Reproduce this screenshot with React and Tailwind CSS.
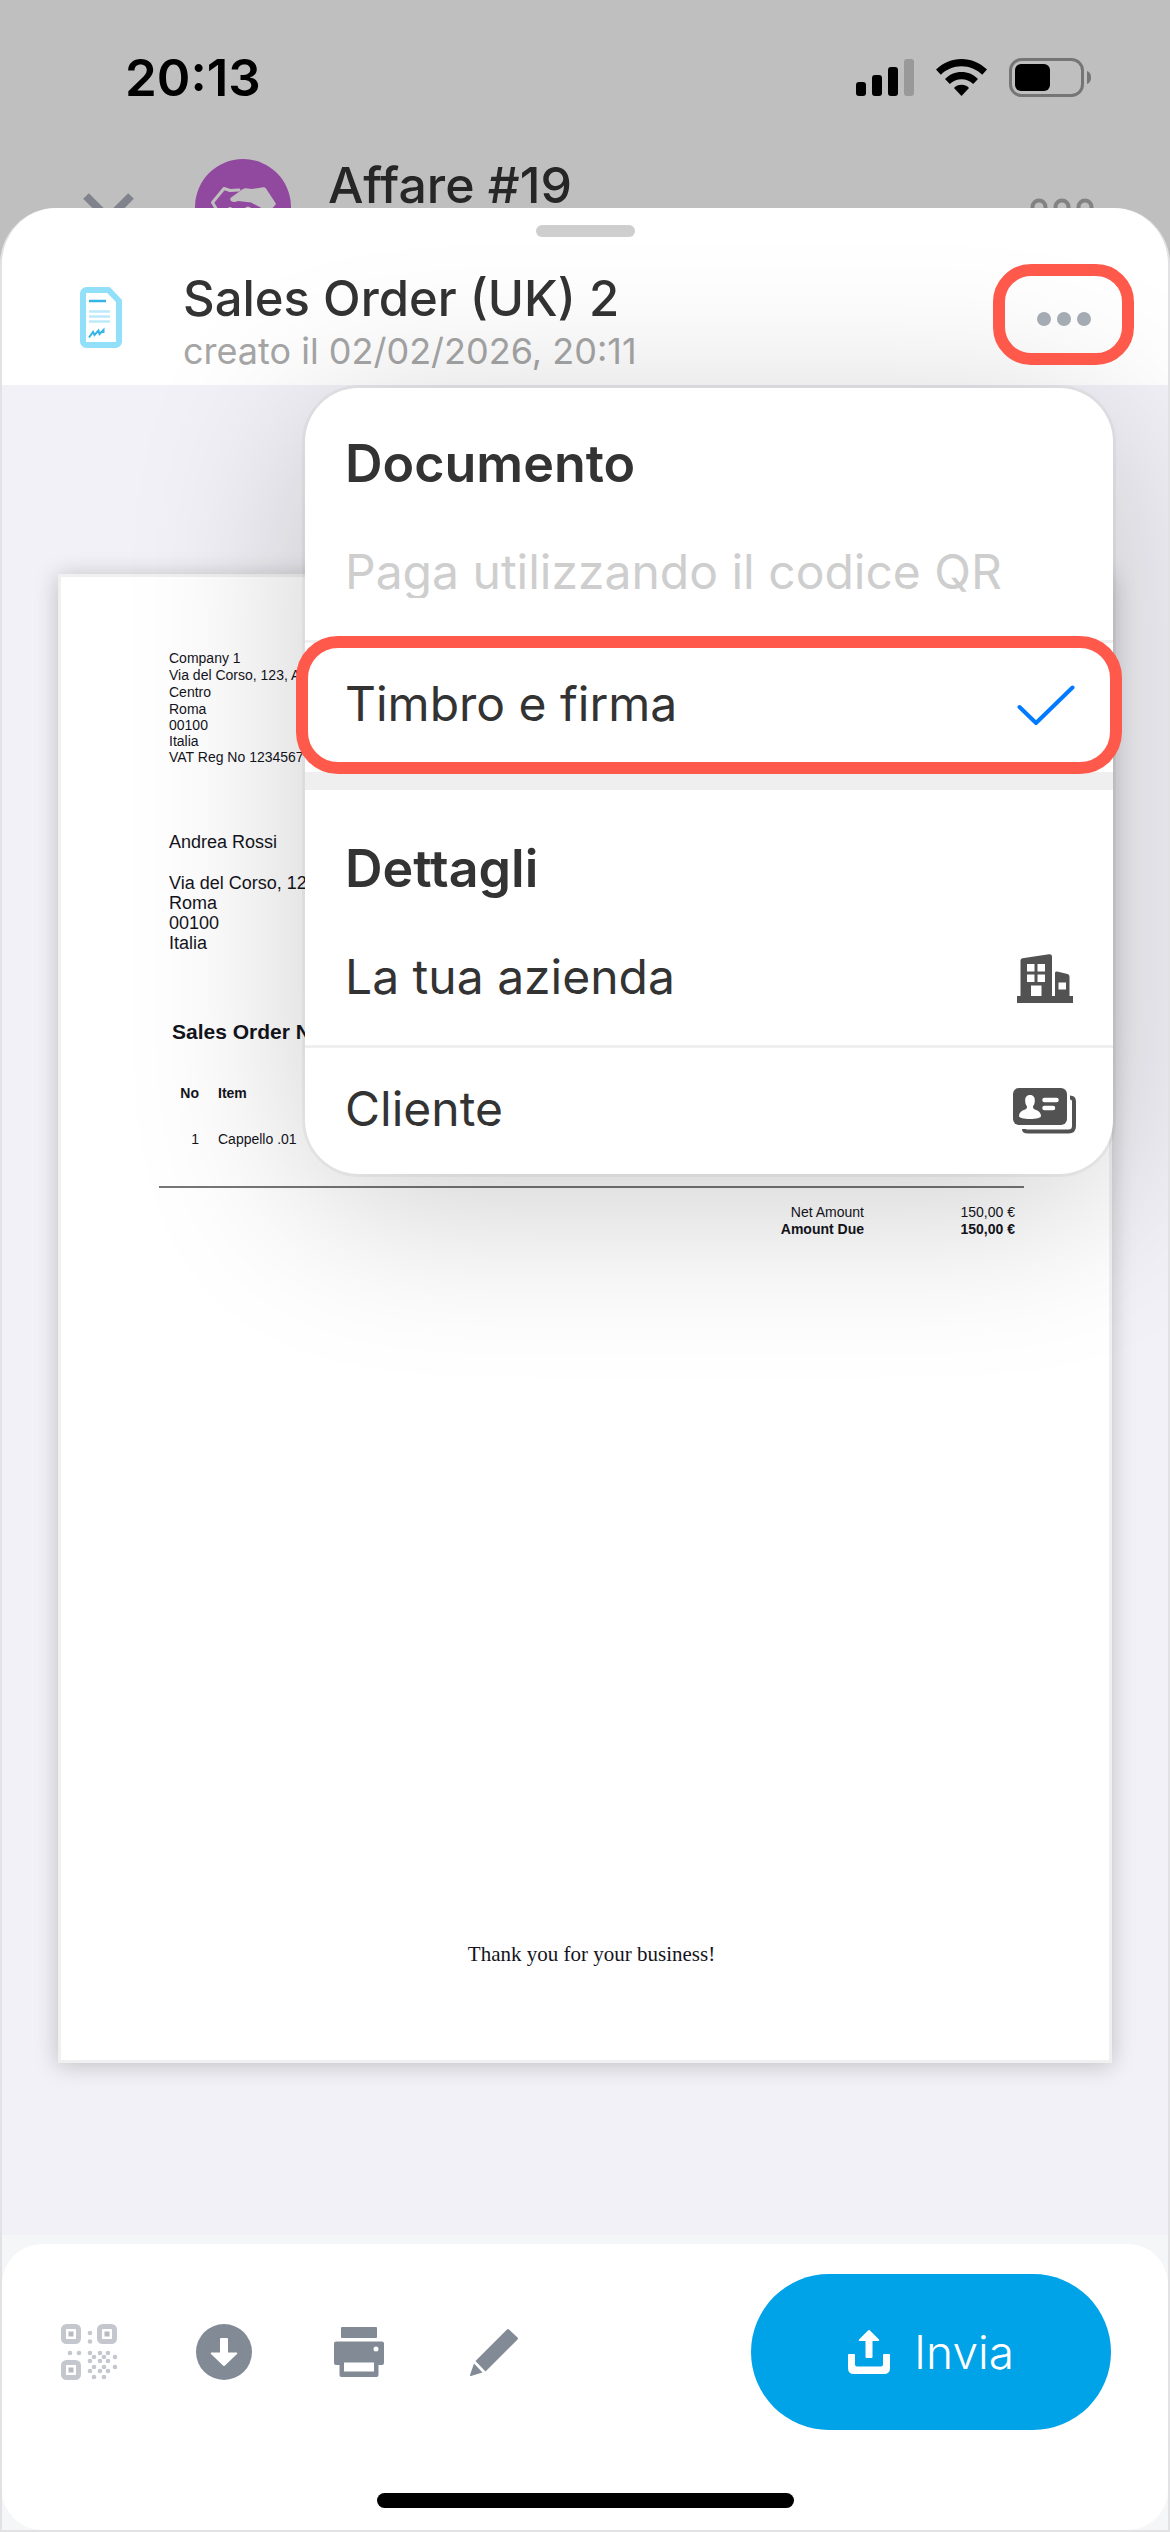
function SignalIcon() {
  return (
    <svg viewBox="0 0 58 37" className="h-[37px] w-[58px]" aria-hidden="true">
      <rect x="0" y="23" width="10" height="14" rx="3" />
      <rect x="16" y="16" width="10" height="21" rx="3" />
      <rect x="32" y="8" width="10" height="29" rx="3" />
      <rect x="48" y="0" width="10" height="37" rx="3" fill="#999" />
    </svg>
  );
}

function WifiIcon() {
  return (
    <svg viewBox="0 0 51 37" className="h-[37px] w-[51px]" aria-hidden="true">
      <path d="M0 10.6C7 3.700 16 0 25.500 0S44 3.700 51 10.600L46.200 15.800C40.500 10.300 33.500 7.300 25.500 7.300S10.500 10.300 4.800 15.800Z" />
      <path d="M9 20C13.500 15.500 19 13 25.500 13S37.500 15.500 42 20L37.200 25C34 21.800 30 20.200 25.500 20.200S17 21.800 13.800 25Z" />
      <path d="M18 29C20 27 22.500 25.800 25.500 25.800S31 27 33 29L25.500 37Z" />
    </svg>
  );
}

function BatteryIcon() {
  return (
    <svg viewBox="0 0 83 39" className="h-[39px] w-[83px]" aria-hidden="true">
      <rect x="1.5" y="1.500" width="72" height="36" rx="11" fill="none" stroke="#757575" strokeWidth="3" />
      <rect x="6" y="6" width="35" height="27" rx="6" />
      <path d="M78 13c3 1 4 3.500 4 6.500s-1 5.500-4 6.500z" fill="#757575" />
    </svg>
  );
}

function DocumentIcon() {
  return (
    <svg viewBox="0 0 42 61" className="h-[61px] w-[42px]" fill="none" aria-hidden="true">
      <path d="M6.500 3H28.500L39 14V54.500a3.500 3.500 0 0 1-3.500 3.500H6.500A3.500 3.500 0 0 1 3 54.500V6.500A3.500 3.500 0 0 1 6.500 3Z" stroke="#92dff9" strokeWidth="6" strokeLinejoin="round" />
      <path d="M9 14h17" stroke="#35b5e5" strokeWidth="2.500" />
      <path d="M9 24.500h21M9 29.500h21M9 34.500h21" stroke="#bde9fa" strokeWidth="2.500" />
      <path d="M9 50.500l4-5.500 1.500 3 4-4.500 1 3.500 4-4v3" stroke="#35b5e5" strokeWidth="2" />
    </svg>
  );
}

function HandshakeBadge() {
  return (
    <svg viewBox="0 0 96 96" className="size-24" aria-hidden="true">
      <circle cx="48" cy="48" r="48" fill="#91489f" />
      <path d="M22 51 17.500 43.500 29 29.500l6 2 9-.5" fill="none" stroke="#bfbfbf" strokeWidth="3" strokeLinecap="round" strokeLinejoin="round" />
      <path d="M36 38.500 48 30q1-.8 2.500-.8L57 30l11-1.800q2-.2 3 1.300L80.500 44q.8 1.500-.7 2.500L74 53 56 43.500 43 42q-4.500 2-7 0-1.500-1.800 0-3.500Z" fill="#bfbfbf" />
      <path d="M33 51q2-3 4 0M50 51q3-4 6 0" fill="none" stroke="#bfbfbf" strokeWidth="3" />
    </svg>
  );
}

function BuildingIcon() {
  return (
    <svg viewBox="0 0 56 49" className="h-[49px] w-14" fill="#525252" fillRule="evenodd" aria-hidden="true">
      <path d="M0 42h3.500V6.500Q3.500 4.500 5.500 4.200L32 .3Q35 0 35 2.500V42h3V19q0-2 2-1.500l10.500 2.500q2 .5 2 2.500V42H56v7H0ZM10 10v7.500h7.500V10ZM20.500 10v7.500H28V10ZM10 20.500V28h7.500v-7.500ZM20.500 20.500V28H28v-7.500ZM14 31.500V42h10.500V31.500ZM41.500 28.500v7h7.500v-7Z" />
    </svg>
  );
}

function CardIcon() {
  return (
    <svg viewBox="0 0 63 46" className="h-[46px] w-[63px]" aria-hidden="true">
      <path d="M57 9.500q4 0 4 4V38q0 5.500-5.500 5.500H15q-4 0-4-2.500" fill="none" stroke="#525252" strokeWidth="4" />
      <rect x="-2" y="-2" width="59" height="42" rx="8" fill="#fff" />
      <rect x="0" y="0" width="54" height="37" rx="6" fill="#525252" />
      <path d="M17 7c3.500 0 5 2.500 4.800 6 0 2.500-1 4-1.800 5.500 0 2 .5 2.500 2.500 3.200 3.500 1.200 5.500 3.300 5.500 6.300 0 2-5 3-11 3s-11-1-11-3c0-3 2-5.100 5.500-6.300 2-.7 2.500-1.200 2.500-3.200-1-1.500-1.800-3-1.800-5.500C12 9.500 13.500 7 17 7Z" fill="#fff" />
      <path d="M31.500 12h12M31.500 20h8.500" stroke="#fff" strokeWidth="4.500" strokeLinecap="round" />
    </svg>
  );
}

function CheckIcon() {
  return (
    <svg viewBox="0 0 58 41" className="h-[41px] w-[58px]" fill="none" aria-hidden="true">
      <path d="M2.500 22 19 38 55.500 2.500" stroke="#007aff" strokeWidth="4" strokeLinecap="round" strokeLinejoin="round" />
    </svg>
  );
}

const QR_DOTS = [
  [29, 9], [29, 17.5], [9, 29], [18, 29],
  [29, 29], [39, 29], [47, 29],
  [33, 33], [43, 33], [54, 33],
  [29, 37], [39, 37], [47, 37],
  [33, 43], [43, 43], [54, 43],
  [29, 47], [39, 47], [47, 47],
  [33, 53], [43, 53],
];

function QrIcon() {
  return (
    <svg viewBox="0 0 56 56" className="size-14" aria-hidden="true">
      {[[0, 0], [36, 0], [0, 36]].map(([x, y]) => (
        <g key={`${x}-${y}`}>
          <rect x={x + 2.5} y={y + 2.5} width="15" height="15" rx="3" fill="none" stroke="#c4c7ce" strokeWidth="5" />
          <rect x={x + 7.5} y={y + 7.5} width="5" height="5" fill="#b6bac2" />
        </g>
      ))}
      {QR_DOTS.map(([x, y]) => (
        <circle key={`${x}-${y}`} cx={x} cy={y} r="2.300" fill="#c4c7ce" />
      ))}
    </svg>
  );
}

function DownloadIcon() {
  return (
    <svg viewBox="0 0 56 56" className="size-14" aria-hidden="true">
      <circle cx="28" cy="28" r="28" fill="#828b95" />
      <path d="M25 14h6q1 0 1 1v13.500h8.500q1.500.3.500 1.500L29 41.500q-1 1-2 0L15 30q-1-1.200.5-1.500H24V15q0-1 1-1Z" fill="#fff" />
    </svg>
  );
}

function PrinterIcon() {
  return (
    <svg viewBox="0 0 50 50" className="size-[50px]" fill="#828b95" fillRule="evenodd" aria-hidden="true">
      <rect x="7" y="0" width="36" height="11" rx="1" />
      <path d="M2 14.500H48q2 0 2 2V36q0 2-2 2H44.500V48q0 2-2 2H7.500q-2 0-2-2V38H2q-2 0-2-2V16.500q0-2 2-2ZM42 19.500a2.500 2.500 0 1 0 0 5 2.500 2.500 0 1 0 0-5ZM10 35.500v9H40v-9Z" />
    </svg>
  );
}

function PencilIcon() {
  return (
    <svg viewBox="0 0 48 47" className="h-[47px] w-12" fill="#828b95" aria-hidden="true">
      <path d="M37 .5q1-1 2 0l8.500 8q1 1 0 2L15.500 42.500 5.500 32Z" />
      <path d="M4 34.500 12.500 43.500 1 47q-1.200.2-1-1Z" />
    </svg>
  );
}

function ShareIcon() {
  return (
    <svg viewBox="0 0 42 44" className="h-11 w-[42px]" fill="#fff" aria-hidden="true">
      <path d="M20 .6q1-1 2 0l9 9q.8 1.100-.6 1.400H24.500V27q0 1-1 1h-5q-1 0-1-1V11h-5.900q-1.400-.3-.6-1.400Z" />
      <path d="M0 25q0-1 1-1H6q1 0 1 1v9.500q0 2 2 2H33q2 0 2-2V25q0-1 1-1h5q1 0 1 1v13q0 6-6 6H6q-6 0-6-6Z" />
    </svg>
  );
}

function StatusBar() {
  return (
    <div className="flex items-start justify-between pr-[78px] pl-[125px]">
      <time className="mt-12 text-[51px] leading-[60px] font-semibold text-black">20:13</time>
      <div className="mt-[58px] flex items-center gap-[22px]">
        <SignalIcon />
        <WifiIcon />
        <BatteryIcon />
      </div>
    </div>
  );
}

function BackgroundHeader() {
  return (
    <header className="h-[208px] overflow-hidden">
      <StatusBar />
      <div className="mt-[51px] flex items-start pr-[76px] pl-[82px]">
        <button type="button" aria-label="Chiudi" className="mt-[34px]">
          <svg viewBox="0 0 53 53" className="size-[53px]" fill="none" aria-hidden="true">
            <path d="M4 3 49 48M49 3 4 48" stroke="#80838b" strokeWidth="8" />
          </svg>
        </button>
        <div className="ml-[60px]">
          <HandshakeBadge />
        </div>
        <h2 className="mt-[3px] ml-[37px] text-[50px] leading-[46px] font-medium text-[#262626]">Affare #19</h2>
        <button type="button" aria-label="Altre opzioni" className="mt-[39px] ml-auto">
          <svg viewBox="0 0 64 18" className="h-[18px] w-16" fill="none" stroke="#828282" strokeWidth="4" aria-hidden="true">
            <circle cx="9" cy="9" r="6.500" />
            <circle cx="32" cy="9" r="6.500" />
            <circle cx="55" cy="9" r="6.500" />
          </svg>
        </button>
      </div>
    </header>
  );
}

function DocumentMenu() {
  return (
    <div role="menu" className="absolute top-full right-[55px] mt-[3px] w-[808px] rounded-[54px] bg-white text-[48px] text-[#333] shadow-[0_0_0_3px_rgba(0,0,0,0.04),0_30px_180px_rgba(0,0,0,0.2)]">
      <h3 className="px-10 pt-[46px] text-[52px] leading-[60px] font-semibold">Documento</h3>
      <button type="button" role="menuitem" disabled className="block w-full border-b-3 border-[#efefef] px-10 pt-[52px] pb-[42px] text-left text-[#cecece]">
        <span className="block h-[52px] overflow-hidden leading-[52px] whitespace-nowrap">Paga utilizzando il codice QR</span>
      </button>
      <div className="relative">
        <button type="button" role="menuitemcheckbox" aria-checked="true" className="flex h-[129px] w-full items-center justify-between pr-[38px] pb-1 pl-10 text-left leading-[60px]">
          <span className="pb-1">Timbro e firma</span>
          <CheckIcon />
        </button>
        <div className="pointer-events-none absolute -inset-x-[9px] -top-[7px] -bottom-[2px] rounded-[42px] border-12 border-[#ff594c]" />
      </div>
      <div className="h-[18px] bg-[#efefef]" />
      <h3 className="px-10 pt-[49px] text-[52px] leading-[60px] font-semibold">Dettagli</h3>
      <button type="button" role="menuitem" className="flex h-[149px] w-full items-center justify-between border-b-3 border-[#efefef] pt-[13px] pr-10 pl-10 text-left leading-[60px]">
        <span className="pb-1">La tua azienda</span>
        <BuildingIcon />
      </button>
      <button type="button" role="menuitem" className="flex h-[126px] w-full items-center justify-between pr-[37px] pl-10 text-left leading-[60px]">
        <span className="pb-1">Cliente</span>
        <CardIcon />
      </button>
    </div>
  );
}

function SheetHeader() {
  return (
    <div className="relative z-10 rounded-t-[54px] bg-white pt-[17px]">
      <div className="mx-auto h-3 w-[99px] rounded-full bg-[#cecece]" />
      <div className="flex items-start pt-[33px] pr-[200px] pb-[11px] pl-[78px]">
        <div className="mt-[17px]">
          <DocumentIcon />
        </div>
        <div className="ml-[61px]">
          <h1 className="text-[49px] leading-[58px] font-medium text-[#333]">Sales Order (UK) 2</h1>
          <p className="text-[36px] leading-[46px] text-[#a6a6a6]">creato il 02/02/2026, 20:11</p>
        </div>
      </div>
      <DocumentMenu />
      <button
        type="button"
        aria-label="Opzioni documento"
        aria-haspopup="menu"
        aria-expanded="true"
        className="absolute top-14 right-[34px] flex h-[101px] w-[141px] items-center justify-center gap-[6px] rounded-[38px] border-12 border-[#ff594c] pt-2"
      >
        <span className="size-[14px] rounded-full bg-[#a5abb2]" />
        <span className="size-[14px] rounded-full bg-[#a5abb2]" />
        <span className="size-[14px] rounded-full bg-[#a5abb2]" />
      </button>
    </div>
  );
}

function InvoicePage() {
  return (
    <article className="aspect-[1053/1488] border-3 border-[#f0f0f1] bg-white font-['Liberation_Sans',Arial,sans-serif] text-[#14141c] shadow-[0_2px_22px_rgba(0,0,0,0.22)]">
      <div className="flex h-full flex-col pt-[73px] pr-[85px] pb-[94px] pl-[98px]">
        <address className="pl-[10px] text-[14px] leading-[17px] not-italic">
          <p>Company 1</p>
          <p>Via del Corso, 123, A</p>
          <p>Centro</p>
          <div className="leading-4">
            <p>Roma</p>
            <p>00100</p>
            <p>Italia</p>
            <p>VAT Reg No 1234567</p>
          </div>
        </address>
        <address className="mt-[67px] pl-[10px] text-[18px] leading-5 not-italic">
          <p>Andrea Rossi</p>
          <p className="mt-[21px]">Via del Corso, 123</p>
          <p>Roma</p>
          <p>00100</p>
          <p>Italia</p>
        </address>
        <h2 className="mt-[67px] pl-[13px] text-[21px] leading-6 font-bold">Sales Order N</h2>
        <table className="mt-[41px] w-full text-left text-[14px] leading-4">
          <thead>
            <tr>
              <th className="w-[40px] pb-[30px] text-right font-bold">No</th>
              <th className="pb-[30px] pl-[19px] font-bold">Item</th>
            </tr>
          </thead>
          <tbody>
            <tr className="border-b-2 border-[#777]">
              <td className="pb-[39px] text-right">1</td>
              <td className="pb-[39px] pl-[19px]">Cappello .01</td>
            </tr>
          </tbody>
        </table>
        <table className="mt-4 ml-auto text-right text-[14px] leading-[17px]">
          <tbody>
            <tr>
              <th scope="row" className="text-right font-normal">Net Amount</th>
              <td className="w-[160px] pr-[9px]">150,00 €</td>
            </tr>
            <tr className="font-bold">
              <th scope="row" className="text-right">Amount Due</th>
              <td className="pr-[9px]">150,00 €</td>
            </tr>
          </tbody>
        </table>
        <p className="mt-auto text-center font-['Liberation_Serif','Times_New_Roman',serif] text-[21px] leading-6">Thank you for your business!</p>
      </div>
    </article>
  );
}

function ActionBar() {
  return (
    <footer className="bg-[#f5f6f8] pt-[9px]">
      <div className="rounded-[40px] bg-white pt-[30px] pb-[22px]">
        <div className="flex items-center justify-between pr-[57px] pl-[59px]">
          <div className="flex items-center">
            <button type="button" aria-label="Codice QR" disabled>
              <QrIcon />
            </button>
            <button type="button" aria-label="Scarica" className="ml-[79px]">
              <DownloadIcon />
            </button>
            <button type="button" aria-label="Stampa" className="ml-[82px]">
              <PrinterIcon />
            </button>
            <button type="button" aria-label="Modifica" className="ml-[86px]">
              <PencilIcon />
            </button>
          </div>
          <button type="button" className="flex h-[156px] w-[360px] items-center justify-center gap-6 rounded-full bg-[#00a2e8] text-[46px] leading-[60px] font-light text-white">
            <ShareIcon />
            Invia
          </button>
        </div>
        <div className="mx-auto mt-[63px] h-[15px] w-[417px] rounded-full bg-black" />
      </div>
    </footer>
  );
}

export default function App() {
  return (
    <div className="flex min-h-screen flex-col bg-[#bfbfbf] font-['Inter',sans-serif]">
      <BackgroundHeader />
      <section className="flex flex-1 flex-col overflow-hidden rounded-t-[56px] border-2 border-t-0 border-[#e2e2e4] bg-[#f2f1f7]">
        <SheetHeader />
        <main className="flex-1 px-14 pt-[189px] pb-[170px]">
          <InvoicePage />
        </main>
        <ActionBar />
      </section>
    </div>
  );
}
